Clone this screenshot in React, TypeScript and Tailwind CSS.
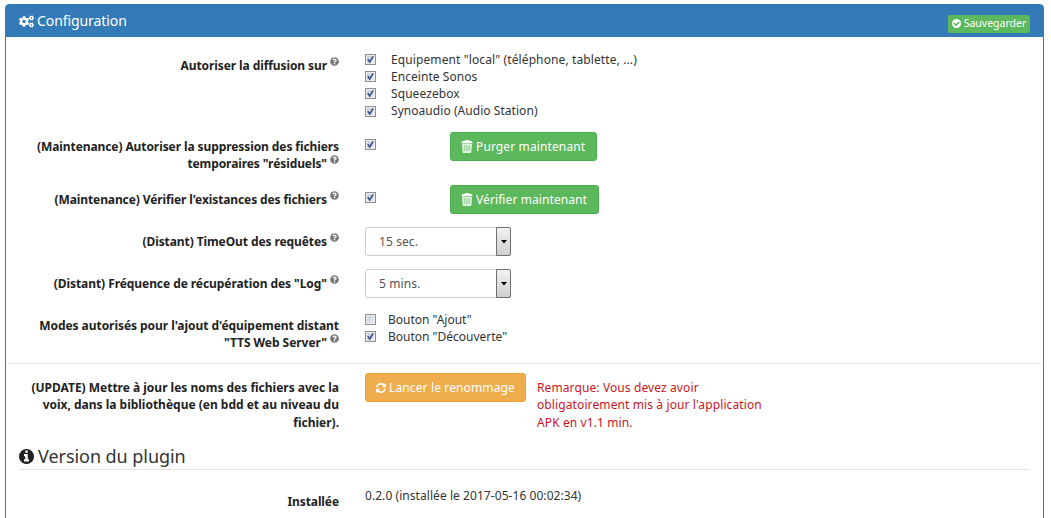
import React from "react";
import { FaCogs, FaQuestionCircle } from "react-icons/fa";

const CIRCLE =
  "m0 0q0 209-103 385.5t-279.5 279.5-385.5 103-385.5-103-279.5-279.5-103-385.5 103-385.5 279.5-279.5 385.5-103 385.5 103 279.5 279.5 103 385.5z";
const INFO =
  "M1152 1376v-160q0-14-9-23t-23-9h-96v-512q0-14-9-23t-23-9h-320q-14 0-23 9t-9 23v160q0 14 9 23t23 9h96v320h-96q-14 0-23 9t-9 23v160q0 14 9 23t23 9h448q14 0 23-9t9-23zm-128-896v-160q0-14-9-23t-23-9h-192q-14 0-23 9t-9 23v160q0 14 9 23t23 9h192q14 0 23-9t9-23zm640 416" + CIRCLE;
const CHECK =
  "M1412 734q0-28-18-46l-91-90q-19-19-45-19t-45 19l-408 407-226-226q-19-19-45-19t-45 19l-91 90q-18 18-18 46 0 27 18 45l362 362q19 19 45 19 27 0 46-19l543-543q18-18 18-45zm252 162" + CIRCLE;
const REFRESH =
  "M1639 1056q0 5-1 7-64 268-268 434.5t-478 166.5q-146 0-282.5-55t-243.5-157l-129 129q-19 19-45 19t-45-19-19-45v-448q0-26 19-45t45-19h448q26 0 45 19t19 45-19 45l-137 137q71 66 161 102t187 36q134 0 250-65t186-179q11-17 53-117 8-23 30-23h192q13 0 22.5 9.5t9.5 22.5zm25-800v448q0 26-19 45t-45 19h-448q-26 0-45-19t-19-45 19-45l138-138q-148-137-349-137-134 0-250 65t-186 179q-11 17-53 117-8 23-30 23h-199q-13 0-22.5-9.5t-9.5-22.5v-7q65-268 270-434.5t480-166.5q146 0 284 55.5t245 156.5l130-129q19-19 45-19t45 19 19 45z";

function Icon({ d, className }: { d: string; className: string }) {
  return (
    <svg viewBox="128 128 1536 1536" fill="currentColor" fillRule="evenodd" className={className}>
      <path d={d} />
    </svg>
  );
}

function Trash() {
  return (
    <svg viewBox="0 0 12 13" className="mr-[3px] h-[13px] w-3 shrink-0">
      <path d="M4.2 0h3.6l.7 1h2.3l.9 2.3H.3L1.2 1h2.3z" fill="#fff" />
      <path d="M1 3.8h10l-.6 8.2q-.1 1-1 1H2.6q-.9 0-1-1z" fill="#e4f4e4" />
      <path d="M3.3 5.2v6M5.1 5.2v6M6.9 5.2v6M8.7 5.2v6" stroke="#5cb85c" strokeWidth=".6" />
    </svg>
  );
}

function Help() {
  return <FaQuestionCircle className="ml-[3px] inline-block size-[9px] -translate-y-[4px] align-baseline text-[#777]" />;
}

function Check({ checked = true }: { checked?: boolean }) {
  return (
    <span role="checkbox" aria-checked={checked} className="block size-[11px] shrink-0 border border-[#8e8f8f] bg-linear-to-br from-[#c0c6d0] to-[#f0f2f6] shadow-[inset_0_0_0_1px_#eeeeee]">
      {checked && (
        <svg viewBox="0 0 9 9" className="block size-[9px]">
          <path d="M1.8 4.3 3.7 7 7.2 1.3" fill="none" stroke="#3c4f8c" strokeWidth="1.6" />
        </svg>
      )}
    </span>
  );
}

function Option({ text, className, checked = true }: { text: string; className: string; checked?: boolean }) {
  return (
    <div className={"flex h-[17.2px] items-center " + className}>
      <Check checked={checked} />
      <span>{text}</span>
    </div>
  );
}

function Row({ label, help = true, tracking = "tracking-[-0.09px]", className, children }: { label: string; help?: boolean; tracking?: string; className: string; children: React.ReactNode }) {
  return (
    <div className={"flex shrink-0 " + className}>
      <div className={"mr-[25px] w-[320px] shrink-0 pt-1.5 text-right font-bold text-[#222] " + tracking}>
        {label}
        {help && <Help />}
      </div>
      {children}
    </div>
  );
}

function Button({ children, className }: { children: React.ReactNode; className: string }) {
  return (
    <button className={"flex h-[29px] shrink-0 items-center whitespace-nowrap rounded-[3px] border text-white " + className}>
      {children}
    </button>
  );
}

function Select({ value }: { value: string }) {
  return (
    <div role="combobox" className="ml-px flex h-[29px] w-[146px] items-stretch rounded-[3px] border border-[#ccc] text-[#555]">
      <span className="flex flex-1 items-center pl-[13px] tracking-[0.1px]">{value}</span>
      <span className="-my-px -mr-px flex w-[15px] items-center justify-center rounded-r-[2px] border border-[#707070] bg-linear-to-b from-[#f2f2f2] to-[#cfcfcf]">
        <svg viewBox="0 0 6 4" className="h-1 w-1.5">
          <path d="M0 0h6L3 3.5z" fill="#000" />
        </svg>
      </span>
    </div>
  );
}

export default function App() {
  return (
    <div className="h-[518px] overflow-hidden bg-white px-[5px] pt-1 font-['Noto_Sans',sans-serif] text-[12px] leading-[17.4px] text-[#333]">
      <section className="flex h-[540px] w-[1039px] flex-col rounded-[4px] border border-[#337ab7]">
        <header className="flex h-[32px] shrink-0 items-center justify-between bg-[#337ab7] pl-[13px] pr-[13px] text-white">
          <h3 className="flex items-center gap-[3px] text-[14px] tracking-[-0.08px]">
            <FaCogs className="size-[15px]" />
            Configuration
          </h3>
          <button className="mt-[5px] flex h-[18px] w-[82px] items-center justify-center gap-[3px] rounded-[2px] bg-[#5cb85c] text-[10.5px]">
            <Icon d={CHECK} className="size-[9px]" />
            Sauvegarder
          </button>
        </header>

        <div className="flex flex-col pl-[13px] pt-[14px]">
          <Row label="Autoriser la diffusion sur" className="h-[81px]">
            <div className="ml-px">
              <Option text={'Equipement "local" (téléphone, tablette, ...)'} className="gap-[15px] tracking-[0.11px]" />
              <Option text="Enceinte Sonos" className="gap-[15px] tracking-[0.05px]" />
              <Option text="Squeezebox" className="gap-[15px] tracking-[0.08px]" />
              <Option text="Synoaudio (Audio Station)" className="gap-[15px] tracking-[0.05px]" />
            </div>
          </Row>
          <Row label={'(Maintenance) Autoriser la suppression des fichiers temporaires "résiduels"'} className="h-[53px]">
            <div className="ml-px w-[85px] pt-[7px]"><Check /></div>
            <Button className="w-[147px] border-[#4cae4c] bg-[#5cb85c] pl-[10px] tracking-[0.12px]"><Trash />Purger maintenant</Button>
          </Row>
          <Row label="(Maintenance) Vérifier l'existances des fichiers" tracking="tracking-[-0.11px]" className="h-[42px]">
            <div className="ml-px w-[85px] pt-[7px]"><Check /></div>
            <Button className="w-[149px] border-[#4cae4c] bg-[#5cb85c] pl-[10px] tracking-[0.09px]"><Trash />Vérifier maintenant</Button>
          </Row>
          <Row label="(Distant) TimeOut des requêtes" className="h-[42px]">
            <Select value="15 sec." />
          </Row>
          <Row label={'(Distant) Fréquence de récupération des "Log"'} tracking="tracking-[-0.07px]" className="h-[42px]">
            <Select value="5 mins." />
          </Row>
          <Row label={"Modes autorisés pour l'ajout d'équipement distant \"TTS Web Server\""} tracking="tracking-[-0.05px]" className="h-[52px]">
            <div className="ml-px">
              <Option text={'Bouton "Ajout"'} className="gap-3" checked={false} />
              <Option text={'Bouton "Découverte"'} className="gap-3" />
            </div>
          </Row>
        </div>

        <hr className="shrink-0 border-[#eee]" />

        <div className="flex flex-col pl-[13px] pr-[13px] pt-[9px]">
          <Row
            label="(UPDATE) Mettre à jour les noms des fichiers avec la voix, dans la bibliothèque (en bdd et au niveau du fichier)."
            help={false}
            tracking="tracking-[-0.01px]"
            className="h-[71px]"
          >
            <Button className="ml-px w-[161px] border-[#eea236] bg-[#f0ad4e] pl-2.5 tracking-[0.13px]">
              <Icon d={REFRESH} className="mr-[3px] size-2.5" />
              Lancer le renommage
            </Button>
            <p className="ml-[11px] w-[240px] pt-1.5 tracking-[0.11px] text-[#c9151e]">
              Remarque: Vous devez avoir obligatoirement mis à jour l'application APK en v1.1 min.
            </p>
          </Row>
          <h2 className="flex h-[26px] items-center gap-1 border-b border-[#e5e5e5] text-[18px] tracking-[-0.05px]">
            <Icon d={INFO} className="size-[15px] text-[#222]" />
            Version du plugin
          </h2>
          <Row label="Installée" help={false} className="h-10 pt-[17px]">
            <span className="ml-px tracking-[0.06px]">0.2.0 (installée le 2017-05-16 00:02:34)</span>
          </Row>
        </div>
      </section>
    </div>
  );
}
